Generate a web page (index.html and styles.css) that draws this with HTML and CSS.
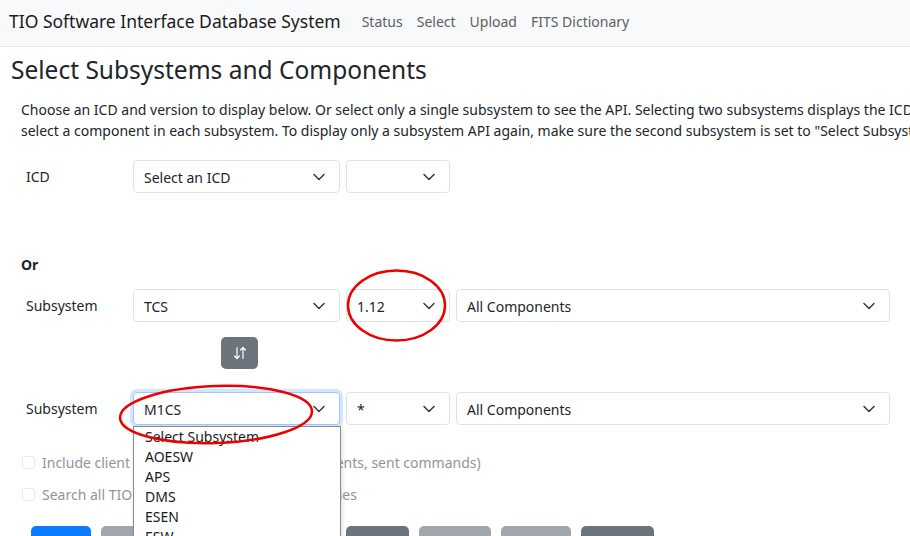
FILE: index.html
```html
<!DOCTYPE html>
<html lang="en">
<head>
<meta charset="utf-8">
<title>TIO Software Interface Database System</title>
<link rel="stylesheet" href="styles.css">
</head>
<body>
<nav class="navbar">
  <span class="brand">TIO Software Interface Database System</span>
  <a class="nav-link">Status</a>
  <a class="nav-link">Select</a>
  <a class="nav-link">Upload</a>
  <a class="nav-link">FITS Dictionary</a>
</nav>
<main class="page">
  <h3 class="title">Select Subsystems and Components</h3>
  <div class="content">
    <p class="intro">Choose an ICD and version to display below. Or select only a single subsystem to see the API. Selecting two subsystems displays the ICD between them.<br>select a component in each subsystem. To display only a subsystem API again, make sure the second subsystem is set to "Select Subsystem".</p>

    <div class="form-row row-icd">
      <label class="row-label">ICD</label>
      <div class="sel sel-main"><span>Select an ICD</span><svg class="chev" viewBox="0 0 12 8"><path d="M1 1.5l5 5 5-5"/></svg></div>
      <div class="sel sel-ver"><span></span><svg class="chev" viewBox="0 0 12 8"><path d="M1 1.5l5 5 5-5"/></svg></div>
    </div>

    <div class="or">Or</div>

    <div class="form-row">
      <label class="row-label">Subsystem</label>
      <div class="sel sel-main"><span>TCS</span><svg class="chev" viewBox="0 0 12 8"><path d="M1 1.5l5 5 5-5"/></svg></div>
      <div class="sel sel-ver"><span>1.12</span><svg class="chev" viewBox="0 0 12 8"><path d="M1 1.5l5 5 5-5"/></svg></div>
      <div class="sel sel-comp"><span>All Components</span><svg class="chev" viewBox="0 0 12 8"><path d="M1 1.5l5 5 5-5"/></svg></div>
    </div>

    <div class="swap-row">
      <button class="swap-btn" type="button"><svg viewBox="0 0 16 16"><path d="M5 2.5v11M2.5 11l2.5 2.5 2.5-2.5M11 13.5v-11M8.5 5l2.5-2.5 2.5 2.5"/></svg></button>
    </div>

    <div class="form-row row-sub2">
      <label class="row-label">Subsystem</label>
      <div class="sel sel-main focused"><span>M1CS</span><svg class="chev" viewBox="0 0 12 8"><path d="M1 1.5l5 5 5-5"/></svg></div>
      <div class="sel sel-ver"><span>*</span><svg class="chev" viewBox="0 0 12 8"><path d="M1 1.5l5 5 5-5"/></svg></div>
      <div class="sel sel-comp"><span>All Components</span><svg class="chev" viewBox="0 0 12 8"><path d="M1 1.5l5 5 5-5"/></svg></div>
    </div>

    <div class="check check-first"><span class="box"></span><span>Include client API information (subscribed events, sent commands)</span></div>
    <div class="check"><span class="box"></span><span>Search all TIO subsystems for API dependencies</span></div>

    <div class="buttons">
      <button class="btn btn-primary" type="button">Show</button>
      <button class="btn btn-light-gray w1" type="button">PDF</button>
      <button class="btn btn-light-gray w2" type="button">Archive</button>
      <button class="btn btn-dark-gray w3" type="button">Diff</button>
      <button class="btn btn-light-gray w4" type="button">Public</button>
      <button class="btn btn-light-gray w5" type="button">Unpublish</button>
      <button class="btn btn-dark-gray w6" type="button">Generate</button>
    </div>
  </div>
</main>

<ul class="dropdown">
  <li>Select Subsystem</li>
  <li>AOESW</li>
  <li>APS</li>
  <li>DMS</li>
  <li>ESEN</li>
  <li>ESW</li>
</ul>

<svg class="annot" width="910" height="536" viewBox="0 0 910 536">
  <ellipse cx="396.5" cy="305.5" rx="48.5" ry="35" />
  <ellipse cx="216" cy="414.5" rx="96" ry="28.5" transform="rotate(-2 216 414.5)" />
</svg>
</body>
</html>
```
FILE: styles.css
```css
* { box-sizing: border-box; }
html, body { margin: 0; padding: 0; }
body {
  width: 910px;
  height: 536px;
  overflow: hidden;
  font-family: "Noto Sans", "Open Sans", sans-serif;
  font-size: 14px;
  line-height: 21px;
  color: #212529;
  background: #fff;
  position: relative;
}
.navbar {
  height: 47px;
  display: flex;
  align-items: center;
  padding: 0 9px 4px;
  background: #f8f9fa;
  border-bottom: 1px solid #e3e5e7;
}
.brand {
  font-size: 17.5px;
  color: #1c1c1c;
  margin-right: 14px;
}
.nav-link {
  color: #5c5f62;
  font-size: 14px;
  padding: 0 7px;
}
.page { padding: 0 11px; }
.title {
  margin: 8px 0 0;
  font-size: 24.5px;
  line-height: 29px;
  font-weight: 400;
  color: #212529;
}
.content { padding-left: 10px; }
.intro {
  margin: 15px 0 0;
  white-space: nowrap;
}
.form-row {
  display: flex;
  align-items: center;
  gap: 6px;
}
.row-icd { margin-top: 19px; }
.row-label {
  width: 106px;
  padding-left: 5px;
}
.sel {
  height: 33px;
  border: 1px solid #dee2e6;
  border-radius: 4px;
  display: flex;
  align-items: center;
  justify-content: space-between;
  padding: 1px 14px 0 10px;
  background: #fff;
  color: #212529;
}
.sel-main { width: 207px; }
.sel-ver { width: 104px; }
.sel-comp { width: 434px; }
.chev {
  width: 12px;
  height: 8px;
  fill: none;
  stroke: #343a40;
  stroke-width: 1.5;
  stroke-linecap: round;
  stroke-linejoin: round;
}
.focused {
  border-color: #9ec5fe;
  box-shadow: 0 0 0 3px rgba(13, 110, 253, 0.18);
}
.or {
  margin-top: 61px;
  font-weight: 700;
}
.form-row + .swap-row { margin-top: 15px; }
.or + .form-row { margin-top: 14px; }
.swap-row { padding-left: 200px; }
.swap-btn {
  width: 37px;
  height: 32px;
  border: 0;
  border-radius: 5px;
  background: #6c757d;
  display: flex;
  align-items: center;
  justify-content: center;
  padding: 0;
}
.swap-btn svg {
  width: 16px;
  height: 16px;
  fill: none;
  stroke: #fff;
  stroke-width: 1.2;
  stroke-linecap: round;
  stroke-linejoin: round;
}
.row-sub2 { margin-top: 23px; }
.check {
  display: flex;
  align-items: center;
  gap: 7px;
  color: #919497;
  margin-top: 11px;
  padding-left: 1px;
}
.check-first { margin-top: 27px; }
.box {
  width: 13px;
  height: 13px;
  border: 1px solid #e6e8ea;
  border-radius: 3px;
  background: #fff;
}
.buttons {
  display: flex;
  gap: 10px;
  margin-top: 21px;
  padding-left: 10px;
}
.btn {
  height: 38px;
  border: 0;
  border-radius: 5px;
  color: #fff;
  font-family: inherit;
  font-size: 14px;
  padding: 0;
}
.btn-primary { background: #0a7bff; width: 60px; }
.btn-light-gray { background: #a0a6ab; }
.btn-dark-gray { background: #6c757d; }
.w1 { width: 112px; }
.w2 { width: 113px; }
.w3 { width: 63px; }
.w4 { width: 72px; }
.w5 { width: 70px; }
.w6 { width: 73px; }

.dropdown {
  position: absolute;
  left: 133px;
  top: 426px;
  width: 208px;
  height: 130px;
  margin: 0;
  padding: 0;
  list-style: none;
  background: #fff;
  border: 1px solid #8a8a8a;
  box-shadow: 1px 2px 4px rgba(0,0,0,0.15);
}
.dropdown li {
  height: 20px;
  line-height: 20px;
  padding-left: 11px;
  color: #1a1a1a;
}
.annot {
  position: absolute;
  left: 0;
  top: 0;
  pointer-events: none;
}
.annot ellipse {
  fill: none;
  stroke: #ee0000;
  stroke-width: 2.5;
}
```
